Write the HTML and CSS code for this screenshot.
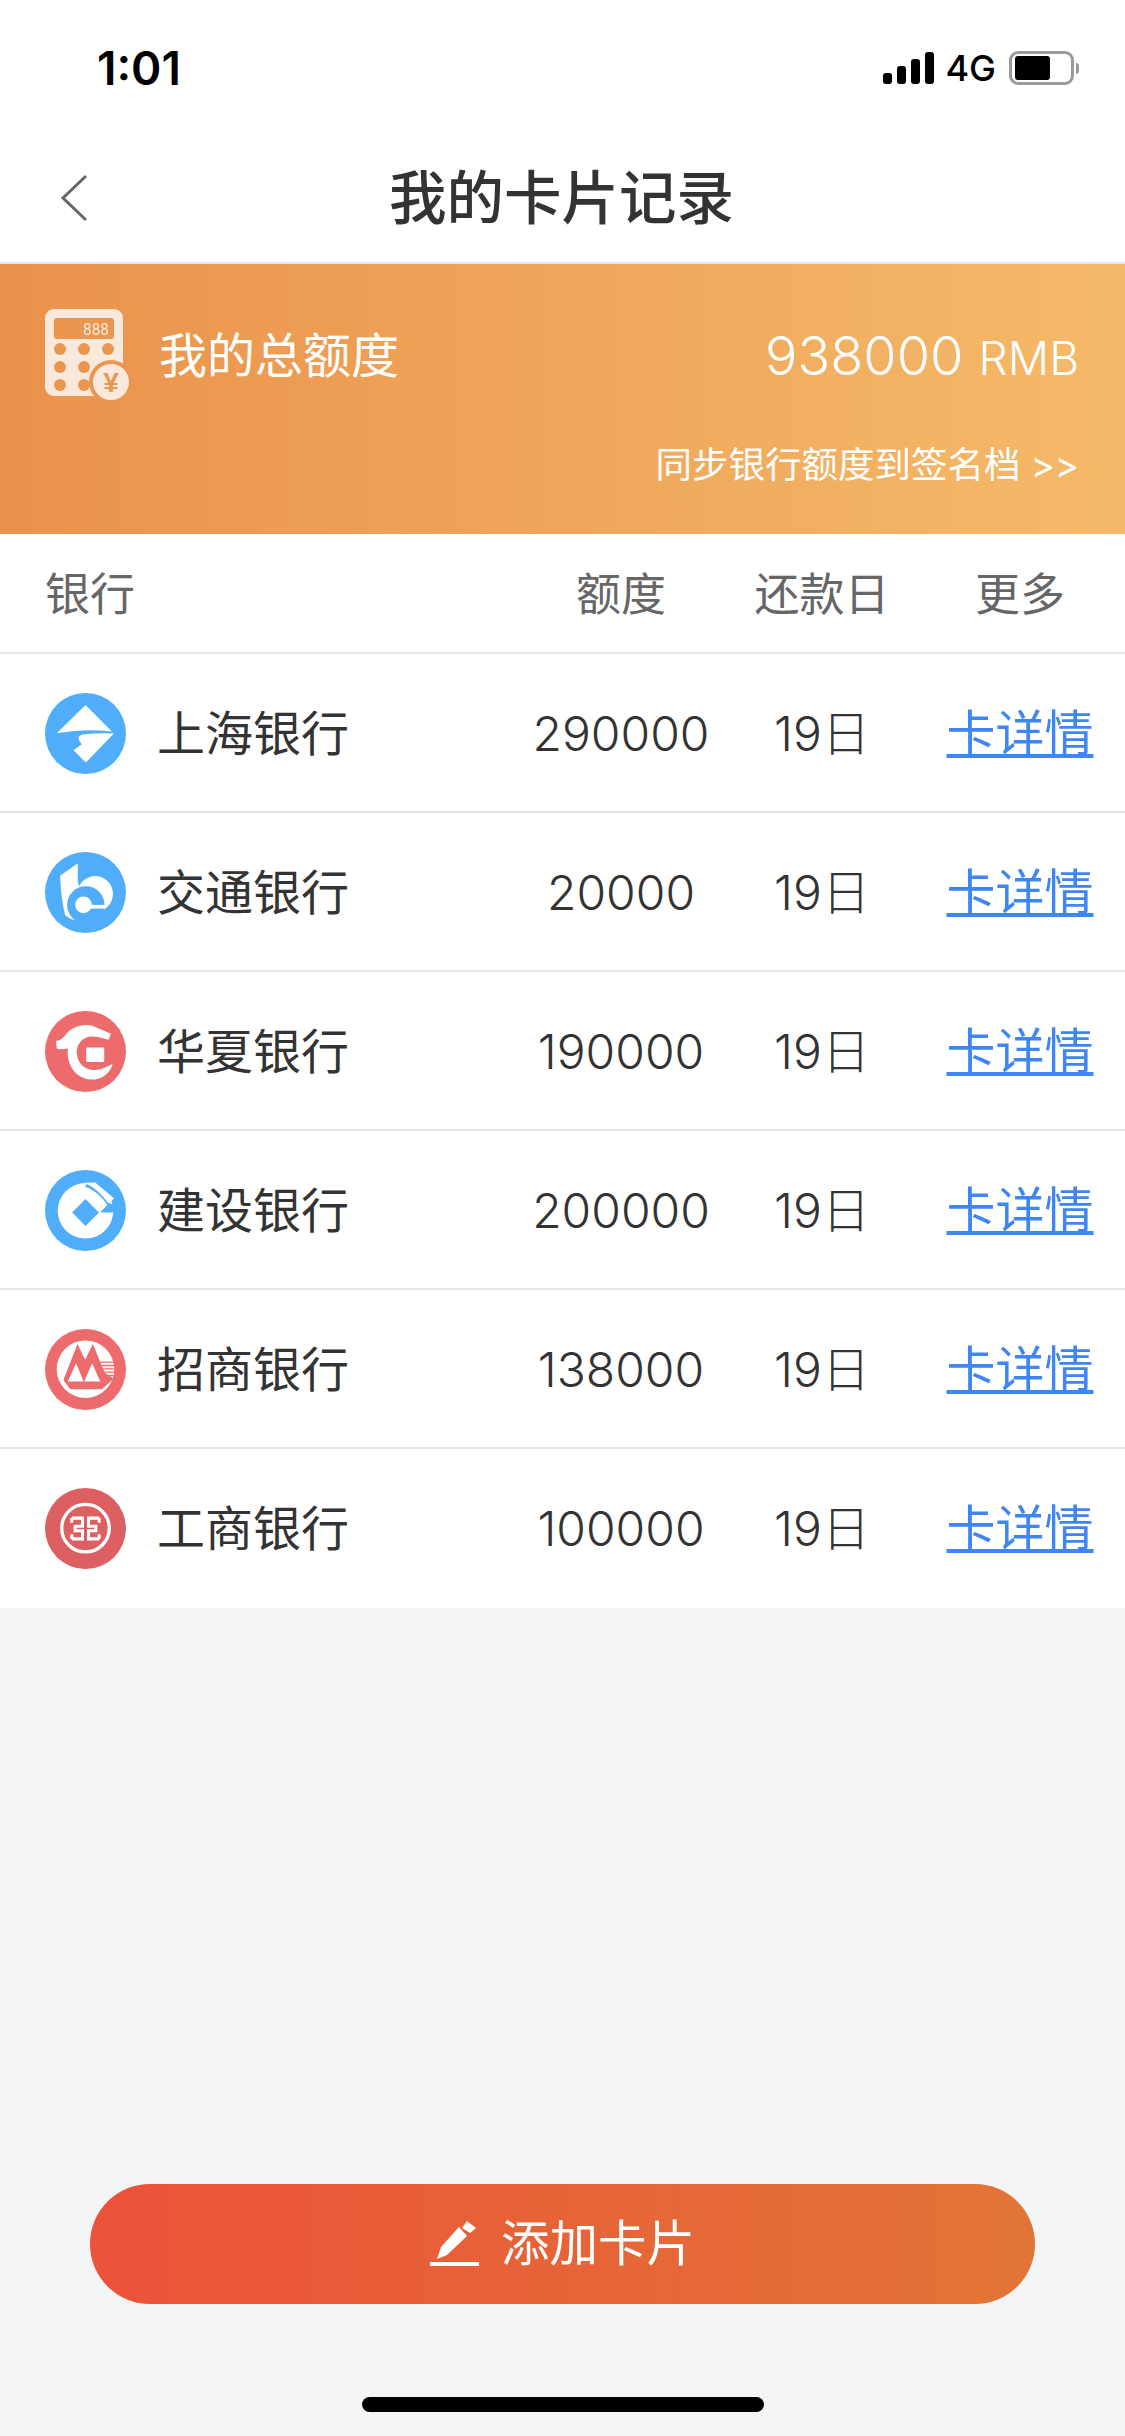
FILE: index.html
```html
<!DOCTYPE html>
<html lang="zh-CN">
<head>
    <meta charset="UTF-8">
    <meta name="viewport" content="width=device-width, initial-scale=1.0">
    <title>我的卡片记录</title>
    <link rel="stylesheet" href="styles.css">
</head>

<body>
<div class="page">

    <div class="status-bar">
        <span class="time">1:01</span>
        <div class="status-right">
            <div class="signal"><i class="s1"></i><i class="s2"></i><i class="s3"></i><i class="s4"></i></div>
            <span class="net">4G</span>
            <div class="battery"><div class="battery-level"></div></div>
            <div class="battery-nub"></div>
        </div>
    </div>

    <div class="nav">
        <svg class="back" width="28" height="48" viewBox="0 0 28 48"><path d="M26 2 L3 24 L26 46" fill="none" stroke="#666" stroke-width="3"/></svg>
        <h1>我的卡片记录</h1>
    </div>

    <div class="banner">
        <div class="banner-top">
            <svg class="calc" width="90" height="94" viewBox="0 0 90 94">
                <rect x="0" y="0" width="78" height="87" rx="9" fill="#f9e9dc"/>
                <rect x="9" y="9" width="60" height="21" rx="3" fill="#ea964f"/>
                <text x="38" y="26" textLength="26" lengthAdjust="spacingAndGlyphs" class="calc-digits">888</text>
                <circle cx="15" cy="40" r="6" fill="#ea964f"/>
                <circle cx="39" cy="40" r="6" fill="#ea964f"/>
                <circle cx="63" cy="40" r="6" fill="#ea964f"/>
                <circle cx="15" cy="58" r="6" fill="#ea964f"/>
                <circle cx="39" cy="58" r="6" fill="#ea964f"/>
                <circle cx="15" cy="76" r="6" fill="#ea964f"/>
                <circle cx="39" cy="76" r="6" fill="#ea964f"/>
                <circle cx="66" cy="73" r="22" fill="#ea964f"/>
                <circle cx="66" cy="73" r="18" fill="#f9e9dc"/>
                <text x="66" y="83" text-anchor="middle" class="calc-yen">¥</text>
            </svg>
            <span class="banner-label">我的总额度</span>
            <span class="banner-total">938000 <small>RMB</small></span>
        </div>
        <div class="banner-sync">同步银行额度到签名档 &gt;&gt;</div>
    </div>

    <div class="table">
        <div class="row head">
            <span class="col-bank">银行</span>
            <span class="col">额度</span>
            <span class="col">还款日</span>
            <span class="col">更多</span>
        </div>

        <div class="row">
            <div class="col-bank">
                <svg class="logo" width="81" height="81" viewBox="0 0 242 242">
                    <circle cx="121" cy="121" r="121" fill="#4fadfa"/>
                    <path d="M121 36 L200 115 Q120 105 35 120 Z" fill="#fff"/>
                    <path d="M206 121 L122 208 L85 171 L110 153 Q100 142 100 134 Q102 126 112 124 Q160 118 206 121 Z" fill="#fff"/>
                </svg>
                <span>上海银行</span>
            </div>
            <span class="col num">290000</span>
            <span class="col num">19日</span>
            <a class="col link">卡详情</a>
        </div>

        <div class="row">
            <div class="col-bank">
                <svg class="logo" width="81" height="81" viewBox="0 0 242 242">
                    <circle cx="121" cy="121" r="121" fill="#4fadfa"/>
                    <path d="M95 36 L45 71 Q48 140 60 188 Q72 200 90 205 L122 158 L98 90 V36 Z" fill="#fff"/>
                    <circle cx="150" cy="125" r="53" fill="#fff"/>
                    <circle cx="122" cy="158" r="56" fill="#4fadfa"/>
                    <circle cx="115" cy="158" r="25" fill="#fff"/>
                    <rect x="125" y="158" width="55" height="11" fill="#fff"/>
                </svg>
                <span>交通银行</span>
            </div>
            <span class="col num">20000</span>
            <span class="col num">19日</span>
            <a class="col link">卡详情</a>
        </div>

        <div class="row">
            <div class="col-bank">
                <svg class="logo" width="81" height="81" viewBox="0 0 242 242">
                    <circle cx="121" cy="121" r="121" fill="#ee6b6d"/>
                    <path d="M33 88 C48 92 56 76 72 60 C92 42 130 36 150 48 C165 55 185 62 197 68 L190 86 C175 82 160 76 140 76 C112 76 92 100 95 130 C100 165 130 182 160 175 C180 170 192 162 202 158 C195 185 170 205 140 205 C105 205 78 180 70 145 C67 132 67 122 69 112 C55 114 40 116 35 112 Z" fill="#fff"/>
                    <rect x="123" y="109" width="54" height="43" rx="4" fill="#fff"/>
                </svg>
                <span>华夏银行</span>
            </div>
            <span class="col num">190000</span>
            <span class="col num">19日</span>
            <a class="col link">卡详情</a>
        </div>

        <div class="row">
            <div class="col-bank">
                <svg class="logo" width="81" height="81" viewBox="0 0 242 242">
                    <circle cx="121" cy="121" r="121" fill="#4fadfa"/>
                    <circle cx="121" cy="122" r="83" fill="#fff"/>
                    <path d="M122 46 Q160 58 192 104" fill="none" stroke="#4fadfa" stroke-width="9"/>
                    <path d="M165 127 L190 100 L215 105 L215 127 Z" fill="#4fadfa"/>
                    <path d="M120 37 L150 37 L207 85 L189 99 Q160 58 120 37 Z" fill="#fff"/>
                    <path d="M121 87 L161 127 L121 167 L81 127 Z" fill="#4fadfa"/>
                </svg>
                <span>建设银行</span>
            </div>
            <span class="col num">200000</span>
            <span class="col num">19日</span>
            <a class="col link">卡详情</a>
        </div>

        <div class="row">
            <div class="col-bank">
                <svg class="logo" width="81" height="81" viewBox="0 0 242 242">
                    <circle cx="121" cy="121" r="121" fill="#ee6b6d"/>
                    <circle cx="121" cy="120" r="86" fill="#fff"/>
                    <path d="M97 45 L120 92 L143 45 L178 130 L205 149 L170 180 L75 180 L55 152 Z" fill="#ee6b6d"/>
                    <path d="M68 157 L93 102 L115 157 Z M117 157 L141 102 L165 157 Z" fill="#fff"/>
                    <path d="M165 99 H207 M168 109 H207 M172 119 H207 M176 129 H207 M180 139 H205" stroke="#ee6b6d" stroke-width="4"/>
                </svg>
                <span>招商银行</span>
            </div>
            <span class="col num">138000</span>
            <span class="col num">19日</span>
            <a class="col link">卡详情</a>
        </div>

        <div class="row">
            <div class="col-bank">
                <svg class="logo" width="81" height="81" viewBox="0 0 242 242">
                    <circle cx="121" cy="121" r="121" fill="#dc6062"/>
                    <circle cx="121" cy="120" r="71" fill="none" stroke="#fff" stroke-width="10"/>
                    <path d="M80 90 H112 V114 H90 V128 H112 V152 H80 M162 90 H130 V114 H152 V128 H130 V152 H162 M80 90 V104 M162 90 V104 M80 152 V138 M162 152 V138" fill="none" stroke="#fff" stroke-width="9"/>
                </svg>
                <span>工商银行</span>
            </div>
            <span class="col num">100000</span>
            <span class="col num">19日</span>
            <a class="col link">卡详情</a>
        </div>
    </div>

    <div class="spacer"></div>

    <div class="add-wrap">
        <button class="add-btn">
            <svg width="49" height="46" viewBox="0 0 49 46">
                <path d="M37 0 L46 7 L40 12 L32 7 Z M29 6 L37 15 L17 34 L7 38 L11 26 Z" fill="#fff"/>
                <rect x="0" y="41" width="49" height="4" fill="#fff"/>
            </svg>
            添加卡片
        </button>
    </div>

    <div class="home-wrap"><div class="home-bar"></div></div>

</div>
</body>
</html>
```

FILE: styles.css
```css
* {
    box-sizing: border-box;
}

body {
    margin: 0;
    font-family: Inter, "Noto Sans CJK SC", sans-serif;
    color: #333333;
    background-color: #f4f5f7;
}

.page {
    display: flex;
    flex-direction: column;
    height: 2436px;
    overflow: hidden;
}

/* status bar */
.status-bar {
    display: flex;
    justify-content: space-between;
    align-items: center;
    height: 136px;
    padding: 0 46px 0 97px;
    background-color: #fff;
    color: #000;
}

.time {
    font-size: 46px;
    font-weight: 600;
}

.status-right {
    display: flex;
    align-items: center;
}

.signal {
    display: flex;
    align-items: flex-end;
    gap: 5px;
    height: 32px;
    margin-right: 11px;
}

.signal i {
    display: block;
    width: 9px;
    border-radius: 3px;
    background-color: #000;
}

.s1 { height: 11px; }
.s2 { height: 18px; }
.s3 { height: 25px; }
.s4 { height: 32px; }

.net {
    font-size: 36px;
    font-weight: 500;
    margin-right: 13px;
}

.battery {
    width: 65px;
    height: 34px;
    padding: 2px 3px;
    border: 3px solid #9a9a9a;
    border-radius: 9px;
}

.battery-level {
    width: 35px;
    height: 100%;
    border-radius: 3px;
    background-color: #000;
}

.battery-nub {
    width: 3px;
    height: 11px;
    margin-left: 2px;
    border-radius: 0 3px 3px 0;
    background-color: #9a9a9a;
}

/* nav */
.nav {
    position: relative;
    display: flex;
    justify-content: center;
    align-items: center;
    height: 128px;
    background-color: #fff;
    border-bottom: 2px solid #e5e5e5;
}

.nav h1 {
    margin: 0 2px 0 0;
    font-size: 57.5px;
    line-height: 1;
    font-weight: 500;
    color: #333;
}

.back {
    position: absolute;
    left: 60px;
    top: 38px;
}

/* banner */
.banner {
    height: 270px;
    padding: 45px 46px 0 45px;
    color: #fff;
    background: linear-gradient(90deg, #ea924b, #f5ba69);
}

.banner-top {
    display: flex;
    align-items: flex-start;
}

.calc {
    flex-shrink: 0;
}

.calc-digits {
    font-family: "Liberation Mono", monospace;
    font-size: 19px;
    fill: #f9e9dc;
}

.calc-yen {
    font-family: "Liberation Sans", sans-serif;
    font-size: 28px;
    font-weight: 700;
    fill: #ea964f;
}

.banner-label {
    margin-left: 24px;
    font-size: 48px;
    line-height: 94px;
}

.banner-total {
    margin-left: auto;
    font-size: 54px;
    line-height: 94px;
    font-weight: 300;
}

.banner-total small {
    font-size: 46px;
}

.banner-sync {
    margin-top: 39px;
    text-align: right;
    font-size: 36.5px;
    line-height: 1.2;
}

/* table */
.table {
    padding-bottom: 2px;
    background-color: #fff;
}

.row {
    display: grid;
    grid-template-columns: 476px 200px 202px 194px;
    align-items: center;
    height: 159px;
    padding-left: 45px;
    padding-top: 2px;
    border-top: 2px solid #e5e5e5;
    font-size: 48px;
    line-height: 1;
}

.row:first-child {
    height: 118px;
    border-top: none;
}

.head {
    color: #666;
    font-size: 45px;
}

.col-bank {
    display: flex;
    align-items: center;
    gap: 31px;
}

.col {
    text-align: center;
}

.num {
    font-weight: 300;
}

.link {
    color: #3f86f5;
    font-size: 49px;
    text-decoration: underline;
}

.logo {
    flex-shrink: 0;
}

.spacer {
    flex: 1;
}

/* bottom */
.add-wrap {
    padding: 0 90px;
}

.add-btn {
    display: flex;
    justify-content: center;
    align-items: center;
    gap: 22px;
    width: 945px;
    height: 120px;
    padding: 0;
    border: none;
    border-radius: 60px;
    color: #fff;
    font-family: inherit;
    font-size: 48.5px;
    line-height: 1;
    background: linear-gradient(90deg, #ec5239, #e27536);
}

.home-wrap {
    display: flex;
    justify-content: center;
    padding: 93px 0 24px;
}

.home-bar {
    width: 402px;
    height: 15px;
    border-radius: 8px;
    background-color: #000;
}
```
